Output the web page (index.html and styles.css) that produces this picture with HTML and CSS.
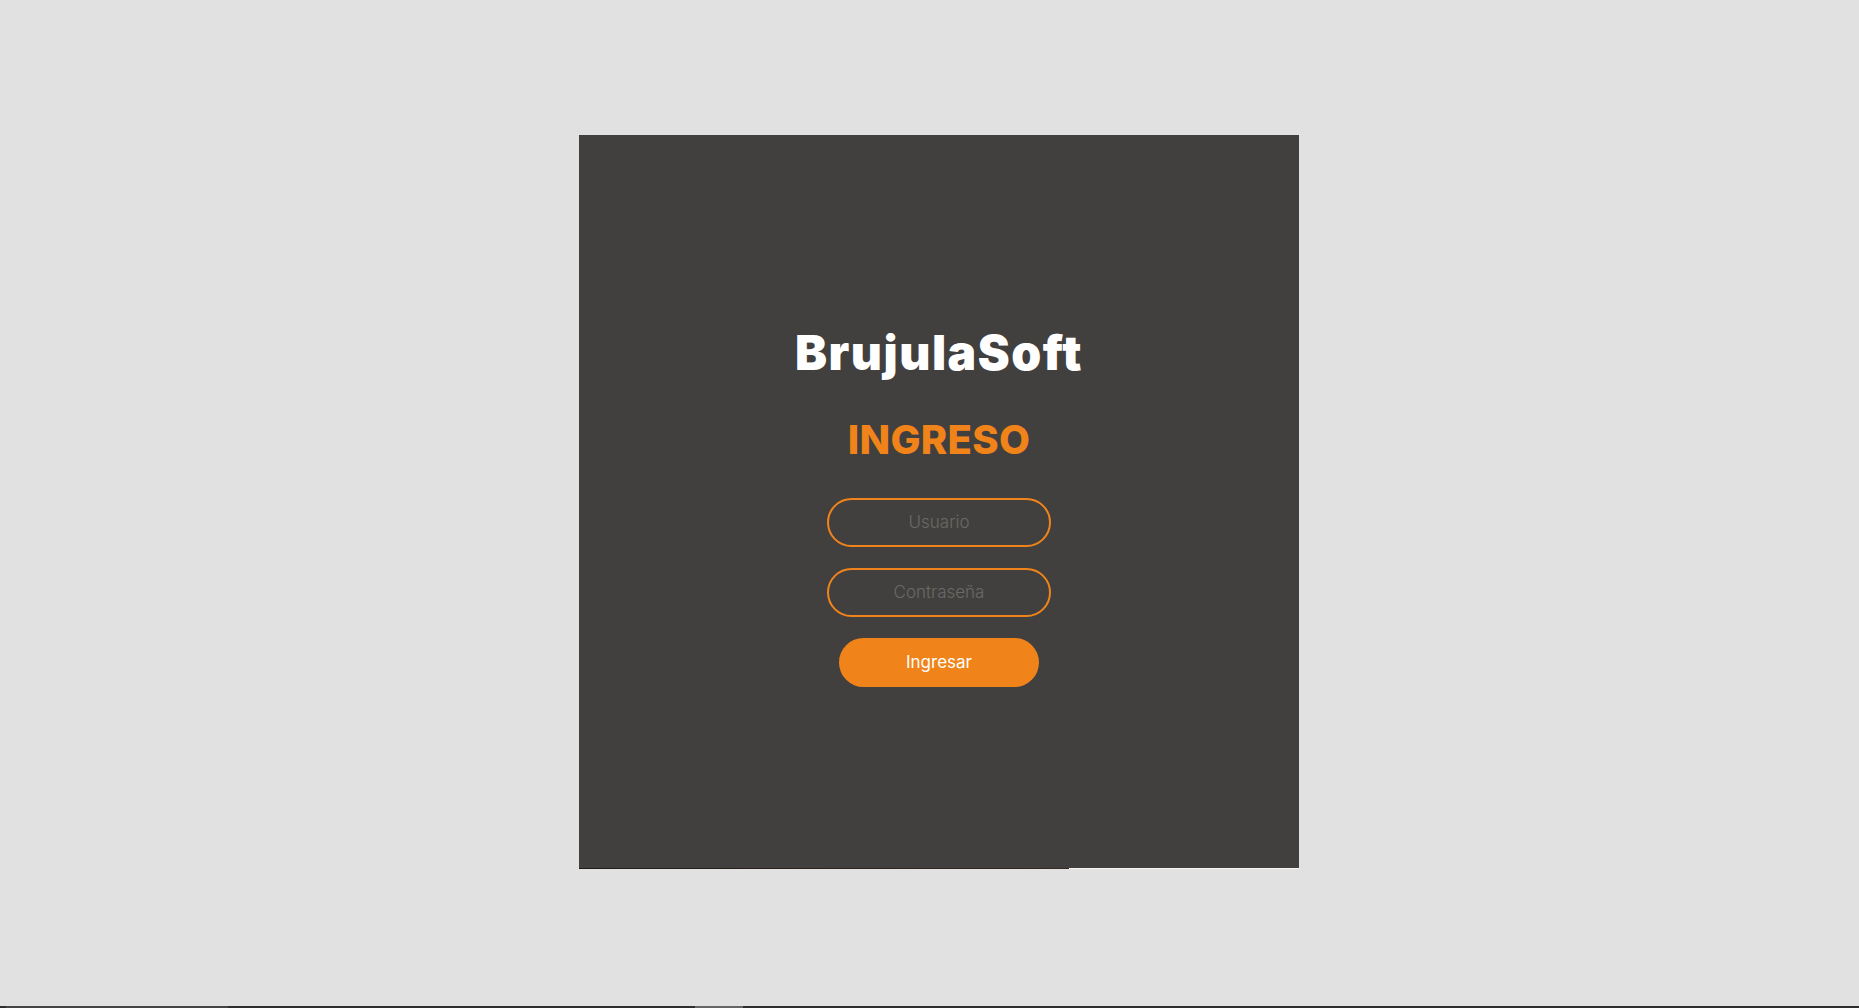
FILE: index.html
```html
<!DOCTYPE html>
<html lang="es">
<head>
<meta charset="utf-8">
<title>BrujulaSoft - Ingreso</title>
<link rel="stylesheet" href="styles.css">
</head>
<body>
<main class="page">
  <section class="card">
    <h1 class="brand">BrujulaSoft</h1>
    <h2 class="title">INGRESO</h2>
    <form class="form">
      <input class="field" type="text" placeholder="Usuario">
      <input class="field" type="password" placeholder="Contraseña">
      <button class="btn" type="button">Ingresar</button>
    </form>
  </section>
  <div class="strip"></div>
</main>
<div class="bottombar"><span class="seg1"></span><span class="seg2"></span></div>
</body>
</html>
```
FILE: styles.css
```css
html, body {
  margin: 0;
  padding: 0;
  height: 100%;
}
body {
  background: #e1e1e1;
  font-family: Inter, "Open Sans", sans-serif;
  overflow: hidden;
}
.page {
  padding-top: 135px;
  padding-left: 579px;
}
.card {
  width: 720px;
  height: 733px;
  background: #42403e;
  box-sizing: border-box;
  padding-top: 190px;
  display: flex;
  flex-direction: column;
  align-items: center;
}
.brand {
  margin: 0;
  font-size: 48px;
  line-height: 56px;
  font-weight: 900;
  color: #ffffff;
  letter-spacing: 1.5px;
}
.title {
  margin: 35px 0 0;
  font-size: 40px;
  line-height: 48px;
  font-weight: 800;
  color: #f0841a;
  letter-spacing: 0.3px;
}
.form {
  margin-top: 34px;
  display: flex;
  flex-direction: column;
  align-items: center;
  gap: 21px;
}
.field {
  width: 224px;
  height: 49px;
  box-sizing: border-box;
  border: 2px solid #f0841a;
  border-radius: 25px;
  background: transparent;
  text-align: center;
  font-family: Inter, "Open Sans", sans-serif;
  font-size: 17px;
  font-weight: 300;
  color: #ddd;
  outline: none;
  padding: 0 0 2px;
}
.field::placeholder {
  color: #6b6967;
}
.btn {
  width: 200px;
  height: 49px;
  border: none;
  border-radius: 25px;
  background: #f0841a;
  color: #ffffff;
  font-family: Inter, "Open Sans", sans-serif;
  font-size: 17px;
  font-weight: 400;
  margin-top: 0;
  padding: 0 0 2px;
}
.strip {
  width: 720px;
  height: 1px;
  background: linear-gradient(to right, #1e1c1a 0, #3a2a20 68%, #f4f4f4 68%, #f4f4f4 100%);
}
.bottombar {
  position: fixed;
  left: 0;
  bottom: 0;
  width: 100%;
  height: 2px;
  background: #2e2e2e;
}
.seg1 {
  position: absolute;
  left: 6px;
  width: 222px;
  height: 2px;
  background: #444;
}
.seg2 {
  position: absolute;
  left: 695px;
  width: 48px;
  height: 2px;
  background: #666;
}
```
